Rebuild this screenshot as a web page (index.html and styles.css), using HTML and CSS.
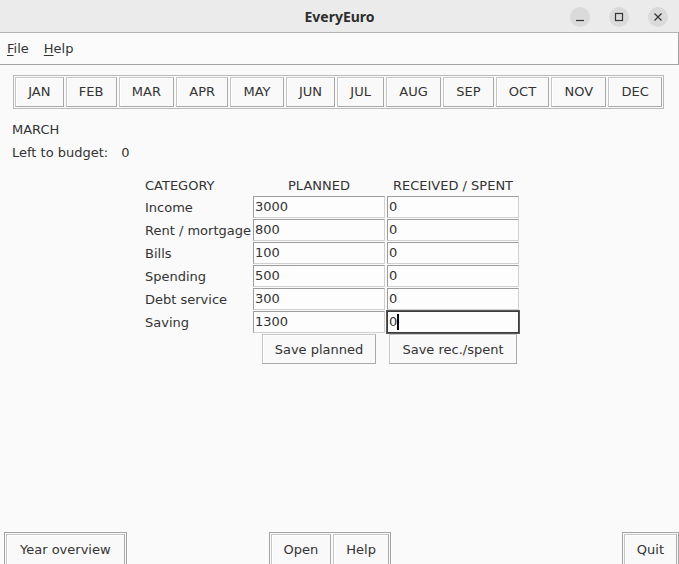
FILE: index.html
```html
<!DOCTYPE html>
<html lang="en">
<head>
<meta charset="utf-8">
<title>EveryEuro</title>
<link rel="stylesheet" href="styles.css">
</head>
<body>
<div class="window">
  <header class="titlebar">
    <div class="spacer"></div>
    <div class="title">EveryEuro</div>
    <div class="controls">
      <span class="ctl"><svg width="10" height="10" viewBox="0 0 10 10"><path d="M1 8.5h8" stroke="#333" stroke-width="1.2" fill="none"/></svg></span>
      <span class="ctl"><svg width="10" height="10" viewBox="0 0 10 10"><rect x="1.5" y="1.5" width="7" height="7" stroke="#333" stroke-width="1.2" fill="none"/></svg></span>
      <span class="ctl"><svg width="10" height="10" viewBox="0 0 10 10"><path d="M1.5 1.5l7 7M8.5 1.5l-7 7" stroke="#333" stroke-width="1.2" fill="none"/></svg></span>
    </div>
  </header>
  <nav class="menubar">
    <span class="menu"><u>F</u>ile</span>
    <span class="menu"><u>H</u>elp</span>
  </nav>
  <main class="content">
    <div class="months">
      <button class="btn month">JAN</button>
      <button class="btn month">FEB</button>
      <button class="btn month">MAR</button>
      <button class="btn month">APR</button>
      <button class="btn month">MAY</button>
      <button class="btn month">JUN</button>
      <button class="btn month">JUL</button>
      <button class="btn month">AUG</button>
      <button class="btn month">SEP</button>
      <button class="btn month">OCT</button>
      <button class="btn month">NOV</button>
      <button class="btn month">DEC</button>
    </div>
    <div class="info">
      <div class="line">MARCH</div>
      <div class="line budget"><span>Left to budget:</span><span>0</span></div>
    </div>
    <div class="table">
      <div class="hdr">CATEGORY</div>
      <div class="hdr center">PLANNED</div>
      <div class="hdr center">RECEIVED / SPENT</div>

      <div class="lbl">Income</div>
      <div class="entry">3000</div>
      <div class="entry">0</div>

      <div class="lbl">Rent / mortgage</div>
      <div class="entry">800</div>
      <div class="entry">0</div>

      <div class="lbl">Bills</div>
      <div class="entry">100</div>
      <div class="entry">0</div>

      <div class="lbl">Spending</div>
      <div class="entry">500</div>
      <div class="entry">0</div>

      <div class="lbl">Debt service</div>
      <div class="entry">300</div>
      <div class="entry">0</div>

      <div class="lbl">Saving</div>
      <div class="entry">1300</div>
      <div class="entry focus">0<span class="caret"></span></div>

      <div></div>
      <div class="center-cell"><button class="btn">Save planned</button></div>
      <div class="center-cell"><button class="btn">Save rec./spent</button></div>
    </div>
  </main>
  <footer class="footer">
    <div class="frame"><button class="btn wide">Year overview</button></div>
    <div class="frame mid"><button class="btn">Open</button><button class="btn">Help</button></div>
    <div class="frame right"><button class="btn">Quit</button></div>
  </footer>
</div>
</body>
</html>
```

FILE: styles.css
```css
html, body {
  margin: 0;
  padding: 0;
}
body {
  background: #fafafa;
  color: #333;
  font-family: "DejaVu Sans", "Liberation Sans", sans-serif;
  font-size: 13px;
  overflow: hidden;
}
.window {
  display: flex;
  flex-direction: column;
  height: 100vh;
}
.titlebar {
  height: 32px;
  background: #ebebeb;
  border-bottom: 1px solid #b4b4b4;
  display: grid;
  grid-template-columns: 1fr auto 1fr;
  align-items: center;
  flex: none;
}
.title {
  font-family: "Noto Sans", "DejaVu Sans", sans-serif;
  font-weight: bold;
  font-size: 14px;
  color: #2e2e2e;
  padding-top: 1px;
}
.controls {
  display: flex;
  justify-content: flex-end;
  gap: 19px;
  padding-right: 11px;
  padding-top: 2px;
}
.ctl {
  width: 20px;
  height: 20px;
  border-radius: 50%;
  background: #dadada;
  display: flex;
  align-items: center;
  justify-content: center;
}
.menubar {
  height: 31px;
  background: #fbfbfb;
  border-bottom: 1px solid #a4a4a4;
  border-right: 1px solid #a4a4a4;
  display: flex;
  align-items: center;
  gap: 15px;
  padding-left: 7px;
  flex: none;
}
.menu u {
  text-decoration-thickness: 1px;
  text-underline-offset: 2px;
}
.content {
  flex: 1;
}
.btn {
  font-family: "DejaVu Sans", "Liberation Sans", sans-serif;
  font-size: 13px;
  color: #333;
  background: #f9f9f9;
  border: 1px solid #c6c6c6;
  border-right-color: #a9a9a9;
  border-bottom-color: #a9a9a9;
  box-shadow: inset 1px 1px 0 #ffffff;
  height: 30px;
  padding: 0 12px;
  margin: 0;
  border-radius: 0;
}
.btn.month {
  padding: 0 12.2px 1px;
}
.months {
  display: inline-flex;
  gap: 2px;
  margin: 10px 0 0 13px;
  padding: 1px;
  border: 1px solid #b9b9b9;
}
.info {
  margin-top: 9px;
  padding-left: 12px;
}
.line {
  line-height: 23px;
  height: 23px;
}
.budget {
  display: flex;
  gap: 13px;
}
.table {
  margin: 11px 0 0 145px;
  display: grid;
  grid-template-columns: 106px 132px 132px;
  grid-template-rows: 20px repeat(6, 22px) 30px;
  column-gap: 2px;
  row-gap: 1px;
  align-items: center;
}
.center {
  text-align: center;
}
.lbl {
  white-space: nowrap;
}
.entry {
  box-sizing: border-box;
  height: 22px;
  line-height: 20px;
  padding-left: 1px;
  background: #fdfdfd;
  border: 1px solid #9c9c9c;
  border-right-color: #d0d0d0;
  border-bottom-color: #d0d0d0;
  display: flex;
  align-items: center;
}
.entry.focus {
  border-color: #3c3c3c;
  box-shadow: 0 0 0 1px #5a5a5a;
}
.caret {
  display: inline-block;
  width: 2px;
  height: 16px;
  background: #000;
}
.center-cell {
  display: flex;
  justify-content: center;
  align-self: stretch;
}
.footer {
  height: 32px;
  display: flex;
  align-items: flex-start;
  padding-left: 4px;
  flex: none;
  overflow: hidden;
}
.frame {
  display: flex;
  gap: 2px;
  padding: 1px 1px 0 1px;
  border: 1px solid #a4a4a4;
  border-bottom: none;
}
.frame .btn {
  height: 31px;
}
.btn.wide {
  padding: 0 13px;
}
.frame.mid {
  margin-left: 142px;
}
.frame.right {
  margin-left: auto;
}
```
